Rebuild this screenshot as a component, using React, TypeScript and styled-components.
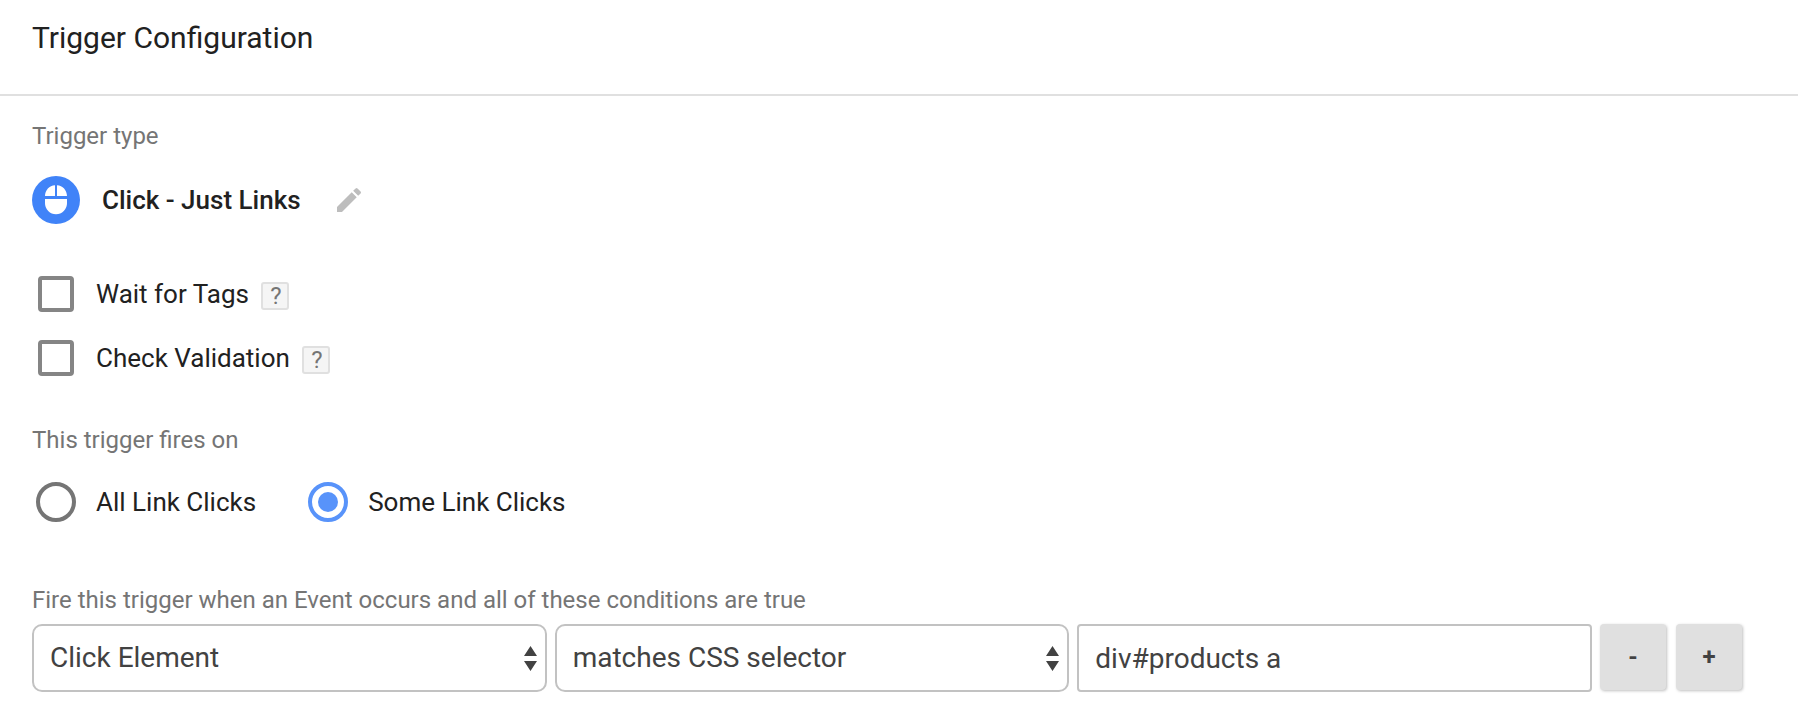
import React, { useState } from "react";
import styled, { createGlobalStyle } from "styled-components";

const GlobalStyle = createGlobalStyle`
  *, *::before, *::after { box-sizing: border-box; }
  body {
    margin: 0;
    background: #fff;
    color: #212121;
    font-family: Roboto, "Liberation Sans", sans-serif;
  }
`;

const Header = styled.header`
  padding: 20px 32px 38px;
  border-bottom: 2px solid #e0e0e0;
`;

const Title = styled.h1`
  margin: 0;
  font-size: 30px;
  line-height: 36px;
  font-weight: 400;
`;

const Body = styled.form`
  display: flex;
  flex-direction: column;
  padding: 24px 56px 24px 32px;
`;

const Section = styled.section`
  margin-bottom: 52px;
`;

const Group = styled.fieldset`
  margin: 0 0 62px;
  padding: 0;
  border: 0;
  min-width: 0;
`;

const captionStyle = `
  margin: 0;
  padding: 0;
  font-size: 24px;
  line-height: 32px;
  font-weight: 400;
  color: #757575;
`;

const Caption = styled.h2`
  ${captionStyle}
`;

const Legend = styled.legend`
  ${captionStyle}
`;

const TypeRow = styled.div`
  display: flex;
  align-items: center;
  height: 48px;
  margin-top: 24px;
`;

const TypeIcon = styled.svg`
  width: 48px;
  height: 48px;
  margin-right: 22px;
`;

const TypeName = styled.span`
  font-size: 26px;
  line-height: 32px;
  font-weight: 500;
`;

const EditButton = styled.button`
  display: flex;
  margin-left: 32px;
  padding: 0;
  border: 0;
  background: none;
  color: #bdbdbd;
  cursor: pointer;

  svg {
    width: 32px;
    height: 32px;
  }
`;

const OptionList = styled.div`
  display: flex;
  flex-direction: column;
  gap: 28px;
  margin-bottom: 48px;
  padding-left: 6px;
`;

const Option = styled.div`
  display: flex;
  align-items: center;
  height: 36px;
`;

const OptionLabel = styled.label`
  display: flex;
  align-items: center;
  font-size: 26px;
  line-height: 32px;
  cursor: pointer;
`;

const CheckBox = styled.input`
  appearance: none;
  width: 36px;
  height: 36px;
  margin: 0 22px 0 0;
  border: 4px solid #858585;
  border-radius: 4px;
  background: #fff;

  &:checked {
    border-color: #5893fa;
    background: #5893fa;
  }
`;

const HelpButton = styled.button`
  width: 28px;
  height: 28px;
  margin: 4px 0 0 12px;
  padding: 0 0 0 2px;
  border: 2px solid #e0e0e0;
  border-radius: 3px;
  background: #f5f5f5;
  color: #757575;
  font: 400 24px/24px Roboto, "Liberation Sans", sans-serif;
  cursor: pointer;
`;

const RadioRow = styled.div`
  display: flex;
  gap: 52px;
  margin-top: 26px;
  padding-left: 4px;
`;

const Radio = styled.input`
  appearance: none;
  display: grid;
  place-items: center;
  width: 40px;
  height: 40px;
  margin: 0 20px 0 0;
  border: 4px solid #757575;
  border-radius: 50%;

  &:checked {
    border-color: #5893fa;
  }

  &:checked::before {
    content: "";
    width: 20px;
    height: 20px;
    border-radius: 50%;
    background: #5893fa;
  }
`;

const ConditionRow = styled.div`
  display: grid;
  grid-template-columns: repeat(3, minmax(0, 1fr)) auto;
  gap: 8px;
  margin-top: 8px;
`;

const fieldStyle = `
  width: 100%;
  height: 68px;
  padding: 0 16px;
  border: 2px solid #c2c2c2;
  background: #fff;
  color: #424242;
  font: 400 28px/36px Roboto, "Liberation Sans", sans-serif;
`;

const SelectBox = styled.div`
  position: relative;

  svg {
    position: absolute;
    top: 22px;
    right: 10px;
    width: 13px;
    height: 25px;
    pointer-events: none;
  }
`;

const Select = styled.select`
  ${fieldStyle}
  appearance: none;
  border-radius: 10px;
`;

const TextInput = styled.input`
  ${fieldStyle}
  border-radius: 4px;
`;

const RowButtons = styled.div`
  display: flex;
  gap: 10px;
`;

const RowButton = styled.button`
  width: 66px;
  height: 66px;
  padding: 0;
  border: 0;
  border-radius: 4px;
  background: #e0e0e0;
  box-shadow: 1px 1px 3px rgba(0, 0, 0, 0.25);
  color: #424242;
  font: 700 24px/32px Roboto, "Liberation Sans", sans-serif;
  cursor: pointer;
`;

const MouseIcon = () => (
  <TypeIcon viewBox="0 0 48 48" aria-hidden="true">
    <circle cx="24" cy="24" r="24" fill="#4083f8" />
    <path
      fill="#fff"
      d="M23 9.200V20H13c0-6 4.300-10.300 10-10.800zM25 9.200C30.700 9.700 35 14 35 20H25zM13 23h22V27.300a11 11 0 0 1-22 0z"
    />
  </TypeIcon>
);

const PencilIcon = () => (
  <svg viewBox="0 0 24 24" fill="currentColor" aria-hidden="true">
    <path d="M3 17.250V21h3.750L17.810 9.940l-3.750-3.750L3 17.250zM20.710 7.040a1 1 0 0 0 0-1.410l-2.340-2.340a1 1 0 0 0-1.410 0l-1.830 1.830 3.750 3.750 1.830-1.830z" />
  </svg>
);

const Arrows = () => (
  <svg viewBox="0 0 13 25" fill="#424242" aria-hidden="true">
    <path d="M6.500 0L13 10H0zM0 15h13L6.500 25z" />
  </svg>
);

function CheckOption({ id, label }: { id: string; label: string }) {
  return (
    <Option>
      <OptionLabel htmlFor={id}>
        <CheckBox type="checkbox" id={id} />
        {label}
      </OptionLabel>
      <HelpButton type="button" aria-label={`Help: ${label}`}>
        ?
      </HelpButton>
    </Option>
  );
}

function SelectField({ label, options }: { label: string; options: string[] }) {
  return (
    <SelectBox>
      <Select aria-label={label}>
        {options.map((o) => (
          <option key={o}>{o}</option>
        ))}
      </Select>
      <Arrows />
    </SelectBox>
  );
}

export default function App() {
  const [fires, setFires] = useState("some");
  const [value, setValue] = useState("div#products a");

  return (
    <>
      <GlobalStyle />
      <Header>
        <Title>Trigger Configuration</Title>
      </Header>
      <Body onSubmit={(e) => e.preventDefault()}>
        <Section>
          <Caption>Trigger type</Caption>
          <TypeRow>
            <MouseIcon />
            <TypeName>Click - Just Links</TypeName>
            <EditButton type="button" aria-label="Edit trigger type">
              <PencilIcon />
            </EditButton>
          </TypeRow>
        </Section>

        <OptionList>
          <CheckOption id="wait" label="Wait for Tags" />
          <CheckOption id="validate" label="Check Validation" />
        </OptionList>

        <Group>
          <Legend>This trigger fires on</Legend>
          <RadioRow>
            <OptionLabel>
              <Radio
                type="radio"
                name="fires"
                checked={fires === "all"}
                onChange={() => setFires("all")}
              />
              All Link Clicks
            </OptionLabel>
            <OptionLabel>
              <Radio
                type="radio"
                name="fires"
                checked={fires === "some"}
                onChange={() => setFires("some")}
              />
              Some Link Clicks
            </OptionLabel>
          </RadioRow>
        </Group>

        <section>
          <Caption>Fire this trigger when an Event occurs and all of these conditions are true</Caption>
          <ConditionRow>
            <SelectField label="Variable" options={["Click Element", "Click URL"]} />
            <SelectField label="Operator" options={["matches CSS selector", "contains"]} />
            <TextInput
              type="text"
              aria-label="Value"
              value={value}
              onChange={(e) => setValue(e.target.value)}
            />
            <RowButtons>
              <RowButton type="button" aria-label="Remove condition">-</RowButton>
              <RowButton type="button" aria-label="Add condition">+</RowButton>
            </RowButtons>
          </ConditionRow>
        </section>
      </Body>
    </>
  );
}
